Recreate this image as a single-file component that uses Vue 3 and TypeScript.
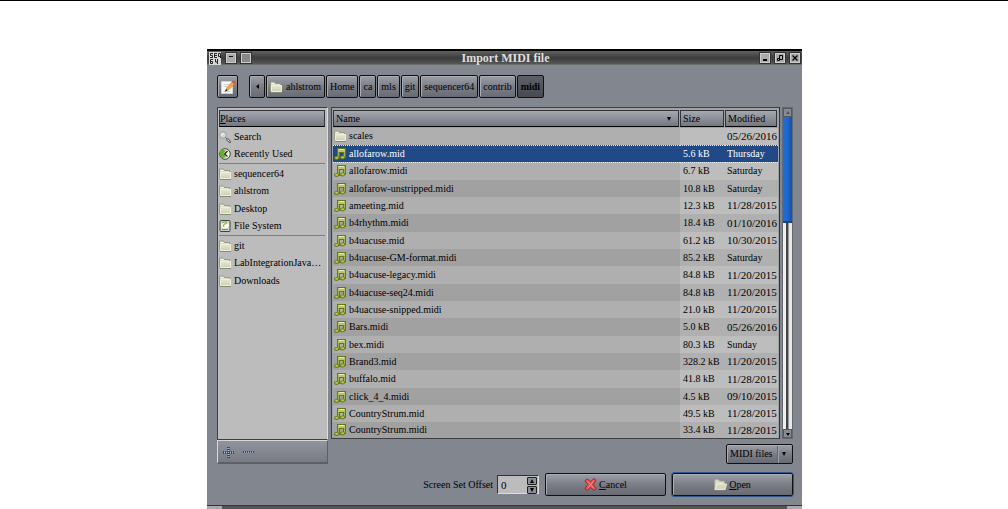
<script setup lang="ts">
import { ref } from 'vue'

interface Place { name: string; icon: 'search' | 'recent' | 'folder' | 'disk' }
interface FileRow { name: string; size: string; modified: string; folder?: boolean }

const placeGroups: Place[][] = [
  [
    { name: 'Search', icon: 'search' },
    { name: 'Recently Used', icon: 'recent' },
  ],
  [
    { name: 'sequencer64', icon: 'folder' },
    { name: 'ahlstrom', icon: 'folder' },
    { name: 'Desktop', icon: 'folder' },
    { name: 'File System', icon: 'disk' },
  ],
  [
    { name: 'git', icon: 'folder' },
    { name: 'LabIntegrationJava…', icon: 'folder' },
    { name: 'Downloads', icon: 'folder' },
  ],
]

const crumbs = ['ahlstrom', 'Home', 'ca', 'mls', 'git', 'sequencer64', 'contrib', 'midi']

const files: FileRow[] = [
  { name: 'scales', size: '', modified: '05/26/2016', folder: true },
  { name: 'allofarow.mid', size: '5.6 kB', modified: 'Thursday' },
  { name: 'allofarow.midi', size: '6.7 kB', modified: 'Saturday' },
  { name: 'allofarow-unstripped.midi', size: '10.8 kB', modified: 'Saturday' },
  { name: 'ameeting.mid', size: '12.3 kB', modified: '11/28/2015' },
  { name: 'b4rhythm.midi', size: '18.4 kB', modified: '01/10/2016' },
  { name: 'b4uacuse.mid', size: '61.2 kB', modified: '10/30/2015' },
  { name: 'b4uacuse-GM-format.midi', size: '85.2 kB', modified: 'Saturday' },
  { name: 'b4uacuse-legacy.midi', size: '84.8 kB', modified: '11/20/2015' },
  { name: 'b4uacuse-seq24.midi', size: '84.8 kB', modified: '11/20/2015' },
  { name: 'b4uacuse-snipped.midi', size: '21.0 kB', modified: '11/20/2015' },
  { name: 'Bars.midi', size: '5.0 kB', modified: '05/26/2016' },
  { name: 'bex.midi', size: '80.3 kB', modified: 'Sunday' },
  { name: 'Brand3.mid', size: '328.2 kB', modified: '11/20/2015' },
  { name: 'buffalo.mid', size: '41.8 kB', modified: '11/28/2015' },
  { name: 'click_4_4.midi', size: '4.5 kB', modified: '09/10/2015' },
  { name: 'CountryStrum.mid', size: '49.5 kB', modified: '11/28/2015' },
  { name: 'CountryStrum.midi', size: '33.4 kB', modified: '11/28/2015' },
]

const selected = ref('allofarow.mid')
const offset = ref('0')
const filter = ref('MIDI files')

function step(by: number) {
  offset.value = String(Math.max(0, Number(offset.value) + by))
}
</script>

<template>
  <svg class="defs" aria-hidden="true">
    <defs>
      <linearGradient id="folderFill" x1="0" y1="0" x2="0" y2="1">
        <stop offset="0" stop-color="#e6e9d4" /><stop offset="1" stop-color="#cbd0ae" />
      </linearGradient>
      <symbol id="folder" viewBox="0 0 12 12">
        <path d="M.5 10.5v-9.500h4l1 1.500h5v8z" fill="#dcdfc8" stroke="#989d80" />
        <path d="M1.500 2.500h3" stroke="#f6f7ea" />
        <path d="M1.500 5V4.500h10v6h-10z" fill="url(#folderFill)" stroke="#eef0dc" />
        <path d="M1 11.500h11" stroke="#868b70" />
      </symbol>
      <symbol id="note" viewBox="0 0 12 12">
        <path d="M3 0h9v10H9V5H6v6H3z" fill="#66771a" />
        <path d="M4 1h7v3H4z" fill="#b9c76a" />
        <path d="M5 1.500h5" stroke="#e6edbb" />
        <path d="M4.500 4v5M10.500 4v5" stroke="#a3b541" />
        <ellipse cx="2.500" cy="10" rx="2.500" ry="2" fill="#66771a" />
        <ellipse cx="8.500" cy="9.500" rx="2.500" ry="2" fill="#66771a" />
        <ellipse cx="2.700" cy="9.800" rx="1.700" ry="1.100" fill="#b4cb3c" />
        <ellipse cx="8.700" cy="9.300" rx="1.700" ry="1.100" fill="#b4cb3c" />
      </symbol>
      <symbol id="search" viewBox="0 0 12 12">
        <circle cx="4" cy="4" r="3.300" fill="#d3d8dc" stroke="#999c9f" />
        <path d="M2.500 4.500q0-2 2-2" fill="none" stroke="#fff" />
        <path d="M6.500 6.500l2 2" stroke="#666" />
        <path d="M8.500 8.500l2.500 2.500" stroke="#6a6d70" stroke-width="2.500" stroke-linecap="round" />
        <path d="M8.500 8.500l2 2" stroke="#e4e6e8" />
      </symbol>
      <symbol id="recent" viewBox="0 0 12 12">
        <circle cx="6" cy="6" r="5.300" fill="#f1f5ea" stroke="#3c4438" />
        <path d="M1 3l2-1.500 4 1-2.500 3L7 9.500 3 10 1 7z" fill="#62b41c" />
        <path d="M8.500 3L5.500 6l3 2.500" fill="none" stroke="#202820" stroke-width="1.300" />
      </symbol>
      <symbol id="disk" viewBox="0 0 12 12">
        <rect x="1" y=".5" width="10" height="11" rx="1" fill="#cdd6cc" stroke="#39463f" />
        <ellipse cx="6" cy="5" rx="4" ry="3.500" fill="#f8faf5" />
        <path d="M3 3l2-1h3" fill="none" stroke="#5e9a38" />
        <path d="M4.500 7V5l2-1.500 2-.5" fill="none" stroke="#c7b338" stroke-width="1.500" />
        <path d="M3 9.500h6" stroke="#77827a" />
      </symbol>
    </defs>
  </svg>

  <div class="page">
    <main class="window">
      <header class="titlebar">
        <svg class="app-icon" viewBox="0 0 12 13" aria-hidden="true">
          <path d="M0 0h12v13H0z" fill="#d7d7d7" />
          <path d="M4 1.500H1.500v2H3.500v2H1M8 1.500H5.500v4H8M5.500 3.500H8M11.500 6V1.500H9.500v3h2M4 7.500H1.500v4h2v-2h-2M6.500 7v3H9M8.500 7v5" fill="none" stroke="#242424" />
        </svg>
        <button class="tb" aria-label="Window menu"><svg viewBox="0 0 8 8"><path d="M2 2.500h4" stroke="#111" /></svg></button>
        <button class="tb plain" aria-label="Stick"></button>
        <h1>Import MIDI file</h1>
        <button class="tb" aria-label="Minimize"><svg viewBox="0 0 8 8"><path d="M2 6h4" stroke="#000" stroke-width="2" /></svg></button>
        <button class="tb" aria-label="Maximize"><svg viewBox="0 0 8 8"><path d="M3.500 1.500h3v4h-3zM1.500 6.500v-2h2v2z" fill="none" stroke="#000" /></svg></button>
        <button class="tb" aria-label="Close"><svg viewBox="0 0 8 8"><path d="M1.500 1.500l5 5M6.500 1.500l-5 5" stroke="#000" stroke-width="1.300" /></svg></button>
      </header>

      <div class="body">
        <nav class="pathbar" aria-label="Path">
          <button class="btn edit" aria-label="Type a file name">
            <svg viewBox="0 0 16 16" aria-hidden="true">
              <path d="M1.500 2.500h11v12h-11z" fill="#f8f8f6" stroke="#d2d2ce" />
              <path d="M3.500 5.500h6M3.500 7.500h4M3.500 12.500h7" stroke="#cfcfcd" />
              <path d="M5.500 12l1.500-3.500 5.500-6 2.500 2L9 10.500z" fill="#f5a93a" stroke="#b86d17" stroke-width=".5" />
              <path d="M11.500 3l1.700-2 2.500 2-1.700 2z" fill="#d8544b" />
              <path d="M5 12.500l1-2.500 1.500 1.500z" fill="#222" />
            </svg>
          </button>
          <button class="btn back" aria-label="Scroll path back"><svg viewBox="0 0 5 5"><path d="M4 0v5L1 2.500z" /></svg></button>
          <button v-for="c in crumbs" :key="c" class="btn crumb" :class="{ current: c === 'midi' }">
            <svg v-if="c === 'ahlstrom'" class="ico" aria-hidden="true"><use href="#folder" /></svg>{{ c }}
          </button>
        </nav>

        <div class="panes">
          <aside class="side">
            <div class="places">
              <button class="head"><span><u>P</u>laces</span></button>
              <ul v-for="(g, i) in placeGroups" :key="i">
                <li v-for="p in g" :key="p.name">
                  <svg class="ico" aria-hidden="true"><use :href="'#' + p.icon" /></svg>{{ p.name }}
                </li>
              </ul>
            </div>
            <div class="tools">
              <button aria-label="Add bookmark"><svg viewBox="0 0 12 12"><path d="M6.500 1v11M1 6.500h11" stroke="#354a6b" stroke-width="3" stroke-dasharray="1 1" /><path d="M6.500 2v9M2 6.500h9" stroke="#a9b9d0" stroke-dasharray="1 1" /></svg></button>
              <button aria-label="Remove bookmark"><svg viewBox="0 0 12 12"><path d="M1 6h11" stroke="#354a6b" stroke-dasharray="1 1" stroke-width="2" /><path d="M2 6.500h10" stroke="#a9b9d0" stroke-dasharray="1 1" /></svg></button>
            </div>
          </aside>

          <section class="content">
            <div class="listing">
              <div class="list">
                <table>
                  <colgroup><col><col class="c-size"><col class="c-date"></colgroup>
                  <thead>
                    <tr>
                      <th scope="col"><button class="head sort">Name<svg viewBox="0 0 6 6"><path d="M1 1h4L3 5z" /></svg></button></th>
                      <th scope="col"><button class="head">Size</button></th>
                      <th scope="col"><button class="head">Modified</button></th>
                    </tr>
                  </thead>
                  <tbody>
                    <tr v-for="f in files" :key="f.name" :class="{ sel: f.name === selected }" @click="selected = f.name">
                      <td><div class="cell"><svg class="ico" aria-hidden="true"><use :href="f.folder ? '#folder' : '#note'" /></svg>{{ f.name }}</div></td>
                      <td>{{ f.size }}</td>
                      <td :class="{ digits: f.modified.includes('/') }">{{ f.modified }}</td>
                    </tr>
                  </tbody>
                </table>
              </div>
              <div class="scroll" aria-hidden="true">
                <div class="arrow dim"><svg viewBox="0 0 6 6"><path d="M1 4h4L3 1z" /></svg></div>
                <div class="track"><div class="thumb"></div></div>
                <div class="arrow"><svg viewBox="0 0 6 6"><path d="M1 2h4L3 5z" /></svg></div>
              </div>
            </div>
            <div class="filter">
              <select v-model="filter" aria-label="File type"><option>MIDI files</option></select>
              <svg viewBox="0 0 6 6" aria-hidden="true"><path d="M1 1h4L3 5z" /></svg>
            </div>
          </section>
        </div>

        <footer class="actions">
          <label for="offset">Screen Set Offset</label>
          <div class="spin">
            <input id="offset" v-model="offset" type="text" inputmode="numeric">
            <div class="steps">
              <button aria-label="Increase" @click="step(1)"><svg viewBox="0 0 6 6"><path d="M1 5h4L3 1z" /></svg></button>
              <button aria-label="Decrease" @click="step(-1)"><svg viewBox="0 0 6 6"><path d="M1 1h4L3 5z" /></svg></button>
            </div>
          </div>
          <button class="btn wide">
            <svg class="big" viewBox="0 0 14 14" aria-hidden="true"><path d="M3.500 1L7 4l3.500-3.500 2.500 2L10 7l3 4.500-2.500 2L7 10l-3 3.500-3-2L4 7 1 3z" fill="#f0504e" stroke="#a81d20" stroke-linejoin="round" /><path d="M3.500 3l7 8M10.500 3L4 11" stroke="#ff8f8a" /></svg><span><u>C</u>ancel</span>
          </button>
          <button class="btn wide open">
            <svg class="big" viewBox="0 0 14 14" aria-hidden="true"><path d="M1 12V2h4l1 1.500h5V7" fill="#dfe2c9" stroke="#b4b99a" /><path d="M3.500 6.500h10L12 12.500H1z" fill="#d5d9b9" stroke="#eff1dd" /></svg><span><u>O</u>pen</span>
          </button>
        </footer>
      </div>
      <div class="grip"></div>
    </main>
  </div>
</template>

<style>
body { margin: 0; background: #fff; }
</style>

<style scoped>
* { box-sizing: border-box; }
.defs { position: absolute; width: 0; height: 0; }
.page {
  border-top: 1px solid #000;
  padding: 48px 206px 0 207px;
  font: 10px/12px "Liberation Serif", serif;
  color: #000;
}
button, input, select { font: inherit; color: inherit; margin: 0; padding: 0; border: 0; border-radius: 0; }
svg { display: block; flex: none; }
ul { list-style: none; margin: 0; padding: 0; }
u { text-underline-offset: 1px; }
.ico { width: 12px; height: 12px; }

.titlebar {
  display: flex; align-items: center; gap: 5px; height: 16px; padding: 0 2px;
  border-top: 2px solid #000;
  background: linear-gradient(#606060, #3c3c3c 50%, #555 90%, #777);
}
.app-icon { width: 12px; height: 13px; }
.titlebar h1 { flex: 1; margin: 0; text-align: center; font-size: 12px; line-height: 14px; color: #dedede; }
.tb { width: 10px; height: 10px; background: #aaa; border: 1px solid #ccc; outline: 1px solid #333; }
.tb.plain { background: #888; }
.tb svg { width: 8px; height: 8px; }

.body { background: #82868f; padding: 10px 9px 9px 10px; }
.btn {
  display: flex; align-items: center; justify-content: center;
  border: 1px solid #111; border-radius: 2px;
  background: linear-gradient(#9da0a8, #7b7e87 50%, #686b74);
  box-shadow: inset 1px 1px #a9acb3;
}
.pathbar { display: flex; gap: 1px; height: 23px; }
.edit { width: 21px; margin-right: 10px; }
.edit svg { width: 16px; height: 16px; }
.back { width: 16px; }
.back svg { width: 5px; height: 5px; }
.crumb { gap: 4px; padding: 0 3px; }
.crumb.current { background: linear-gradient(#5d6068, #484a50); box-shadow: none; font-weight: bold; }

.panes { display: flex; gap: 3px; margin-top: 9px; }
.side { display: flex; flex-direction: column; width: 111px; }
.places { flex: 1; padding: 2px 2px 0 1px; background: #bcbcbc; border: 1px solid #3e3f43; border-right-color: #ddd; }
.head {
  display: flex; align-items: center; justify-content: space-between; width: 100%; height: 17px; padding: 0 3px 0 2px;
  border: 1px solid #33353a; border-bottom: 1px solid #000;
  background: linear-gradient(#a4a7ae, #92959d 40%, #74777f);
  text-align: left;
}
.head svg { width: 6px; height: 6px; margin-right: 3px; }
.places .head { margin-bottom: 1px; padding-left: 0; }
.places ul + ul { border-top: 1px solid #7c7e82; margin-top: 1px; padding-top: 1px; }
.places li { display: flex; align-items: center; gap: 3px; height: 17px; white-space: nowrap; }
.places ul + ul li:nth-child(2) { height: 18px; }
.tools {
  display: flex; align-items: center; gap: 8px; height: 24px; padding-left: 4px;
  border: 1px solid #5c5f66; border-left: 1px solid #d8d8d8; border-top-color: #d8d8d8; border-bottom-width: 2px;
  background: linear-gradient(#91949c, #787b84);
}
.tools button { background: none; }
.tools svg { width: 12px; height: 12px; }

.content { flex: 1; display: flex; flex-direction: column; }
.listing { display: flex; gap: 2px; }
.list { flex: 1; padding: 2px 1px 0; background: #9fa1a5; border: 1px solid #3e3f43; border-right-color: #333; }
table { width: 100%; border-collapse: collapse; table-layout: fixed; }
.c-size { width: 45px; }
.c-date { width: 53px; }
th { padding: 0 1px 1px 0; font-weight: normal; }
td { height: 17px; padding: 0 0 0 3px; line-height: 12px; white-space: nowrap; background: #bdbdbd; }
td:first-child { padding-left: 1px; background: #afafaf; }
tr:nth-child(even) td { background: #b0b0b0; }
tr:nth-child(even) td:first-child { background: #a1a1a1; }
tbody tr:nth-child(3n) td { height: 18px; }
tbody tr:last-child td { height: 16px; }
td:last-child { padding-left: 2px; }
td.digits { font-size: 11px; line-height: 11px; }
tr.sel td, tr.sel td:first-child { background: #204a87; color: #fff; border-top: 1px dotted #e6edf6; border-bottom: 1px dotted #e6edf6; }
.cell { display: flex; align-items: center; gap: 3px; }

.scroll { display: flex; flex-direction: column; width: 11px; border: 1px solid #666970; }
.arrow { display: grid; place-items: center; height: 9px; background: #888b93; border: 1px solid #55585f; }
.arrow svg { width: 6px; height: 6px; }
.dim svg { opacity: .4; }
.track { flex: 1; background: linear-gradient(90deg, #eee 0 3px, #444 3px 5px, #999 5px 6px, #e8e8e8 6px); }
.thumb { height: 34%; background: linear-gradient(90deg, #1c6fe0, #176bd8 50%, #1c4f9c); border-bottom: 2px solid #1b4680; }
.filter { position: relative; align-self: flex-end; width: 67px; height: 20px; margin-top: 5px; }
.filter select {
  appearance: none; width: 100%; height: 100%; padding-left: 3px;
  border: 1px solid #111; border-radius: 2px; box-shadow: inset 1px 1px #a9acb3;
  background: linear-gradient(90deg, transparent 50px, #62656c 50px 51px, #a0a3aa 51px 52px, transparent 52px), linear-gradient(#9da0a8, #7b7e87 50%, #686b74);
}
.filter svg { position: absolute; right: 6px; top: 7px; width: 6px; height: 6px; pointer-events: none; }

.actions { display: flex; align-items: center; justify-content: flex-end; height: 23px; margin-top: 9px; }
.spin { display: flex; width: 42px; height: 19px; margin: 0 6px 0 4px; background: #bcbcbc; border: 1px solid #303135; border-right-color: #ddd; border-bottom-color: #ddd; }
.spin input { flex: 1; min-width: 0; padding-left: 3px; background: none; font-size: 11px; }
.steps { display: flex; flex-direction: column; width: 11px; padding: 1px 1px 1px 0; gap: 1px; }
.steps button { display: grid; place-items: center; flex: 1; background: #8c8f97; border: 1px solid #222; border-radius: 1px; }
.steps svg { width: 6px; height: 6px; }
.wide { width: 121px; height: 23px; gap: 2px; }
.wide + .wide { margin-left: 6px; }
.big { width: 13px; height: 13px; }
.open { outline: 1px solid #35588c; }
.grip { height: 4px; border-top: 1px solid #333; background: linear-gradient(90deg, #aaa 0 15px, #555 15px calc(100% - 15px), #aaa calc(100% - 15px)); }
</style>
